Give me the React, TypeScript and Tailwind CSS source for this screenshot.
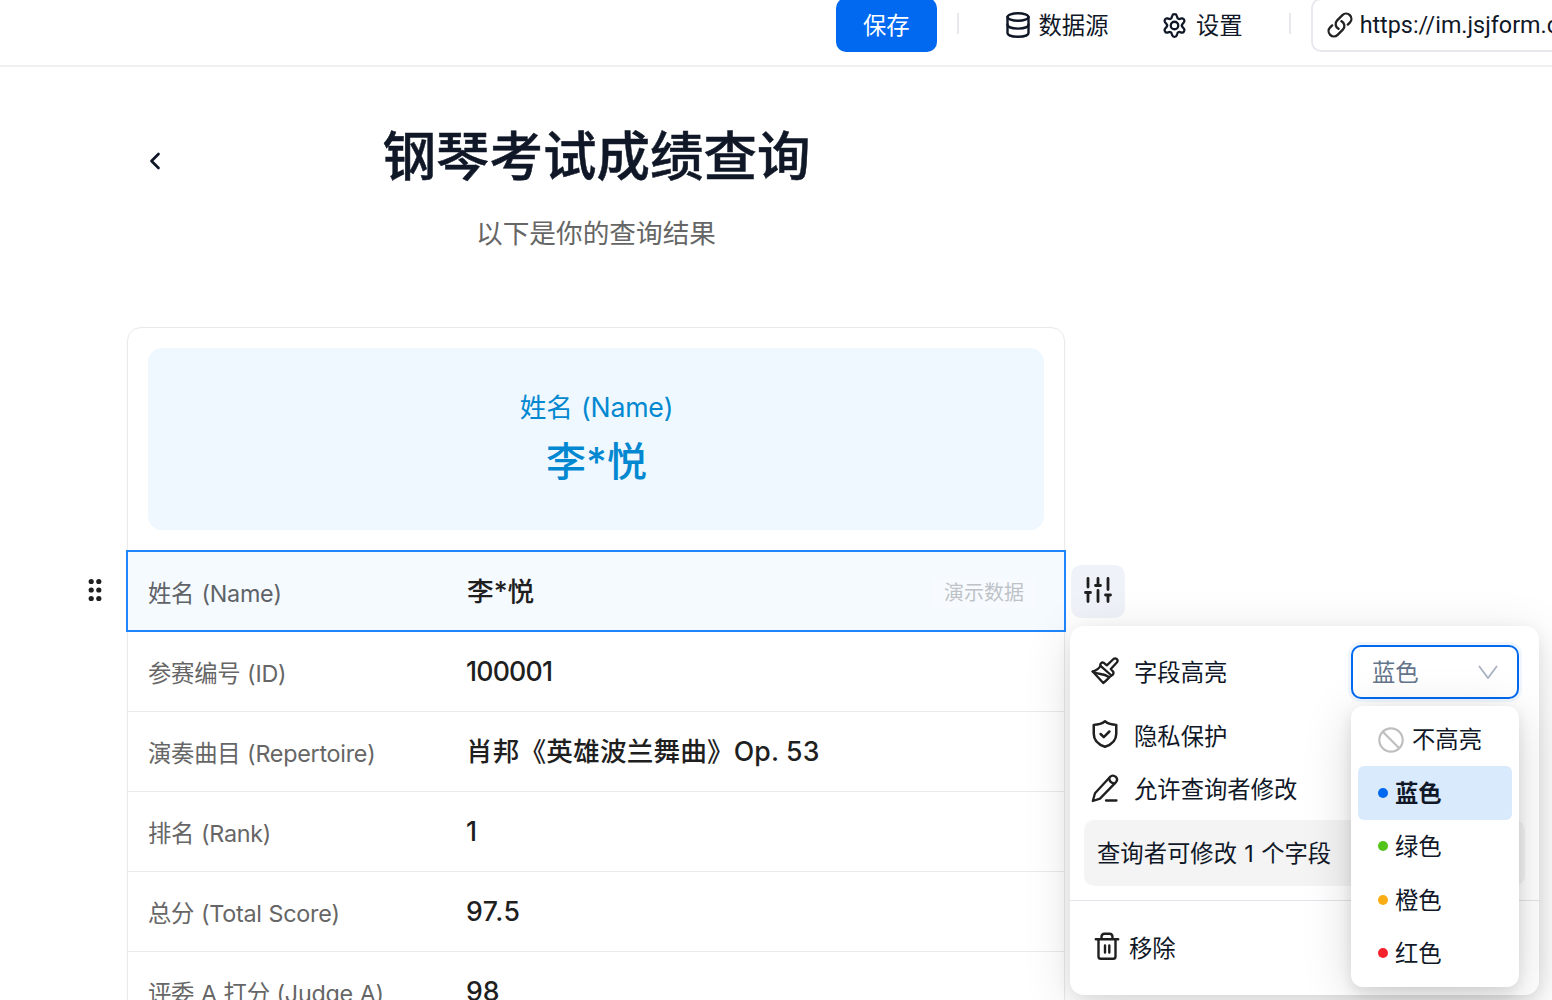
import React from 'react';
import { ChevronLeft } from 'lucide-react';

interface Field {
  label: string;
  value: string;
  valueClass?: string;
}

const FIELDS: Field[] = [
  { label: '参赛编号 (ID)', value: '100001', valueClass: 'tracking-[-0.8px]' },
  { label: '演奏曲目 (Repertoire)', value: '肖邦《英雄波兰舞曲》Op. 53', valueClass: 'tracking-[0.12px]' },
  { label: '排名 (Rank)', value: '1' },
  { label: '总分 (Total Score)', value: '97.5', valueClass: 'tracking-[0.5px]' },
  { label: '评委 A 打分 (Judge A)', value: '98' },
];

const COLORS = [
  { name: '蓝色', dot: 'bg-[#0069f0]', selected: true },
  { name: '绿色', dot: 'bg-[#52c41a]', selected: false },
  { name: '橙色', dot: 'bg-[#faad14]', selected: false },
  { name: '红色', dot: 'bg-[#f5222d]', selected: false },
];

interface IconProps {
  children: React.ReactNode;
  className: string;
  size?: number;
  stroke?: number;
}

// Shared wrapper for the stroke icons
const Icon = ({ children, className, size = 24, stroke = 2 }: IconProps) => (
  <svg
    viewBox={`0 0 ${size} ${size}`}
    fill="none"
    stroke="currentColor"
    strokeWidth={stroke}
    strokeLinecap="round"
    strokeLinejoin="round"
    className={`shrink-0 ${className}`}
  >
    {children}
  </svg>
);

const Header = () => (
  <header className="flex h-[67px] items-start border-b-2 border-[#f0f0f1] pl-[836px] text-[23.33px] text-[#101828]">
    <button className="-mt-0.5 flex h-[54px] w-[100.5px] shrink-0 items-center justify-center rounded-[10px] bg-[#0069f0] pt-[3px] text-white">
      保存
    </button>
    <div className="mt-[13px] ml-[20px] h-[21px] w-0.5 shrink-0 bg-[#e8e9ee]" />
    <div className="ml-[46.5px] flex h-[50px] shrink-0 items-center gap-[7.5px]">
      <Icon className="h-[26px] w-[26px]" size={26} stroke={2.4}>
        <ellipse cx="13" cy="5" rx="10.500" ry="3.800" />
        <path d="M2.500 5v16c0 2 4 3.800 10.500 3.800S23.500 23 23.500 21V5" />
        <path d="M2.500 12.800c0 2 4 3.800 10.500 3.800s10.500-1.800 10.500-3.800" />
      </Icon>
      <span className="pt-[3px]">数据源</span>
    </div>
    <div className="ml-[54px] flex h-[50px] shrink-0 items-center gap-[8.5px]">
      <Icon className="h-[25px] w-[25px]" stroke={2.2}>
        <path d="M9.800 2.600c.5-1.900 3.900-1.900 4.400 0l.5 1.700a2 2 0 0 0 2.500 1.400l1.600-.5c2-.5 3.600 2.300 2.200 3.800l-1.200 1.400a2.300 2.300 0 0 0 0 3.200l1.200 1.400c1.400 1.500-.2 4.300-2.200 3.800l-1.600-.5a2 2 0 0 0-2.500 1.400l-.5 1.700c-.5 1.900-3.900 1.900-4.400 0l-.5-1.700a2 2 0 0 0-2.500-1.400l-1.600.5c-2 .5-3.600-2.300-2.200-3.800l1.200-1.400a2.300 2.300 0 0 0 0-3.200L3 9C1.600 7.500 3.200 4.700 5.200 5.200l1.600.5a2 2 0 0 0 2.500-1.400z" />
        <circle cx="12" cy="12" r="3.600" />
      </Icon>
      <span className="pt-[3px]">设置</span>
    </div>
    <div className="mt-[13px] ml-[46px] h-[21px] w-0.5 shrink-0 bg-[#e8e9ee]" />
    <div className="-mt-0.5 ml-[20px] flex h-[54px] w-[320px] shrink-0 items-center gap-[6px] rounded-[10px] border-2 border-[#e8e9ee] pl-[13px]">
      <Icon className="h-[28px] w-[28px] text-[#222]" stroke={2}>
        <path d="M13.190 8.688a4.500 4.500 0 0 1 1.242 7.244l-4.500 4.500a4.500 4.500 0 0 1-6.364-6.364l1.757-1.757m13.350-.622 1.757-1.757a4.500 4.500 0 0 0-6.364-6.364l-4.500 4.500a4.500 4.500 0 0 0 1.242 7.244" />
      </Icon>
      <span className="pt-px font-['Roboto',sans-serif]">https://im.jsjform.com</span>
    </div>
  </header>
);

const DragHandle = () => (
  <svg viewBox="0 0 14 24" fill="currentColor" className="absolute top-[26px] -left-[40.5px] h-[24px] w-[14px] text-[#1f1f1f]">
    {[3.5, 12, 20.5].map((y) => (
      <React.Fragment key={y}>
        <circle cx="3.200" cy={y} r="2.600" />
        <circle cx="10.800" cy={y} r="2.600" />
      </React.Fragment>
    ))}
  </svg>
);

const ColorSelect = () => (
  <div className="relative -mt-px">
    <div className="flex h-[54px] w-[168px] items-center justify-between rounded-[10px] border-2 border-[#0069f0] bg-white pr-[19px] pl-[19px] text-[#64748b] shadow-[0_0_0_3px_rgba(0,105,240,0.06)]">
      <span className="pt-[3px]">蓝色</span>
      <svg viewBox="0 0 20 14" fill="none" stroke="#a8b3c2" strokeWidth="1.800" className="-mt-px h-[14px] w-[20px]">
        <path d="M1 1l9 12 9-12" />
      </svg>
    </div>

    {/* Options */}
    <div className="absolute top-[61px] left-0 z-10 h-[281px] w-[168px] rounded-[12px] bg-white p-[7px] shadow-[0_10px_50px_rgba(0,0,0,0.15),0_5px_14px_rgba(0,0,0,0.10)]">
      <div className="flex h-[53px] items-center gap-[8px] pl-[20px]">
        <Icon className="h-[26px] w-[26px] text-[#bfbfbf]">
          <circle cx="12" cy="12" r="10.800" />
          <path d="M4.400 4.400l15.200 15.200" />
        </Icon>
        <span className="pt-px">不高亮</span>
      </div>
      {COLORS.map((c) => (
        <div
          key={c.name}
          className={`flex h-[53.500px] items-center gap-[7px] rounded-[6px] pl-[20px] ${c.selected ? 'bg-[#d9eafd] font-bold' : ''}`}
        >
          <span className={`h-[10px] w-[10px] rounded-full ${c.dot}`} />
          <span className="pt-[3px]">{c.name}</span>
        </div>
      ))}
    </div>
  </div>
);

const FieldSettings = () => (
  <div className="absolute top-[74px] left-[942px] z-10 h-[369px] w-[469px] rounded-[14px] bg-white text-[23.33px] text-[#101828] shadow-[0_10px_50px_rgba(0,0,0,0.12),0_5px_16px_rgba(0,0,0,0.08)]">
    <div className="flex h-[93px] items-center pr-[20px] pl-[20px]">
      <Icon className="-mt-[3px] h-[30px] w-[30px] text-[#1f1f1f]" size={30} stroke={2.3}>
        <path d="M2.700 15.500C6 14.500 9 12.800 10.500 9.800C9.800 7.500 11.800 5.800 13.800 6.800L16.800 9.300L23.500 3C25.800 1.200 29 4 26.800 6.500L20.800 13L23 15.500C24 17 23.300 19 21.500 19.500C19 21 17 24.500 13.300 27Z" />
        <path d="M10.500 9.800L21.500 19.500M2.700 15.500C8 19 13 17 18 20.500" />
      </Icon>
      <span className="ml-[14px] flex-1 pt-px">字段高亮</span>
      <ColorSelect />
    </div>
    <div className="-mt-px flex h-[36px] items-center pl-[20px]">
      <Icon className="-mt-[4px] h-[30px] w-[30px] text-[#1f1f1f]">
        <path d="M12 1.800c2.500 2 5.500 2.800 9 2.900v7.100c0 5-3.500 8.600-9 10.400-5.500-1.800-9-5.400-9-10.400V4.700c3.500-.1 6.500-.9 9-2.900z" />
        <path d="M8.500 12l2.500 2.500 4.500-4.500" />
      </Icon>
      <span className="ml-[14px] pt-[2px]">隐私保护</span>
    </div>
    <div className="mt-[18px] flex h-[36px] items-center pl-[20px]">
      <Icon className="-mt-[5px] h-[30px] w-[30px] text-[#1f1f1f]" size={30} stroke={2.3}>
        <path d="M20.200 3.700C23.300.2 29.300 5.300 26 9.100L10 25.600L2.800 28L5 20.300Z" />
        <path d="M19.300 5C19 8 21.500 10.500 24.500 10.300M16 27.500H26.500" />
      </Icon>
      <span className="ml-[14px]">允许查询者修改</span>
    </div>
    <div className="mx-[14px] mt-[12px] flex h-[66px] items-center rounded-[10px] bg-[#f4f4f4] pt-[2px] pl-[13px] [word-spacing:0.8px]">
      查询者可修改 1 个字段
    </div>
    <div className="mt-[14px] flex h-[94px] items-center border-t border-[#e2e4e9] pl-[22px]">
      <Icon className="-mt-[3px] h-[30px] w-[30px] text-[#1f1f1f]" size={30} stroke={2.4}>
        <path d="M3.800 8.200H26.200M6.500 8.200V25.500C6.500 27 7.200 27.800 8.800 27.800H21.200C22.800 27.800 23.500 27 23.500 25.500V8.200M9.500 8V6C9.500 4 10.500 2.700 12.500 2.700H17.500C19.500 2.700 20.500 4 20.500 6V8M13 14.500V21.500M17.300 14.500V21.500" />
      </Icon>
      <span className="ml-[7px] pt-[3px]">移除</span>
    </div>
  </div>
);

const SelectedRow = () => (
  <div className="relative -mx-0.5 flex h-[82px] items-center border-2 border-[#1f86fb] bg-[#f5faff] pl-[20px]">
    <DragHandle />
    <span className="mt-[6px] w-[319px] text-[23.33px] tracking-[-0.25px] text-[#5f6368] [word-spacing:1px]">姓名 (Name)</span>
    <span className="flex-1 text-[26.67px] font-medium text-[#1f1f1f]">李*悦</span>
    <span className="mt-[4px] mr-[28px] rounded bg-[#f7fbff] px-[12px] text-[20px] text-[#bfc3c8]">演示数据</span>
    <button className="absolute top-[13px] left-[943px] flex h-[53px] w-[54px] items-center justify-center rounded-[10px] bg-[#eff3f9] pb-[3px] text-[#1f1f1f]">
      <svg viewBox="0 0 28 26" fill="none" stroke="currentColor" strokeWidth="2.800" strokeLinecap="round" className="h-[26px] w-[28px]">
        <path d="M4 1.500v8.500M4 16v8.500M1.500 15.500h5M14 1.500v6.500M14 13.500v11M11.500 8.500h5M24 1.500v11M24 18v6.500M21.500 18h5" />
      </svg>
    </button>
    <FieldSettings />
  </div>
);

export default function App() {
  return (
    <div className="h-screen w-full overflow-hidden bg-white font-['Inter','Noto_Sans_CJK_SC',sans-serif]">
      <Header />
      <main className="ml-[127px] w-[938px]">
        <div className="flex h-[260px] flex-col items-center">
          <div className="mt-[50px] flex h-[80px] w-full items-center">
            <ChevronLeft className="mt-[8px] ml-[14px] h-[28px] w-[28px] text-[#101828]" strokeWidth={2.3} />
            <h1 className="flex-1 pr-[41px] text-center text-[53.5px] font-medium text-[#101828] [-webkit-text-stroke:0.5px]">钢琴考试成绩查询</h1>
          </div>
          <p className="mt-[16px] text-[26.67px] text-[#666]">以下是你的查询结果</p>
        </div>

        <section className="rounded-t-[14px] border border-[#e9eaec] shadow-[0_1px_3px_rgba(0,0,0,0.04)]">
          <div className="mx-[20px] mt-[20px] mb-[20px] flex h-[182px] flex-col items-center rounded-[14px] bg-[#eff8ff] pt-[39px] text-[#0288d1]">
            <div className="ml-[1px] h-[40px] text-[26.67px] leading-[40px] tracking-[-0.2px] [word-spacing:1px]">姓名 (Name)</div>
            <div className="mt-[5px] ml-[1px] h-[60px] text-[40px] leading-[60px] font-medium">李*悦</div>
          </div>
          <SelectedRow />
          {FIELDS.map((f) => (
            <div key={f.label} className="flex h-[80px] items-center border-b border-[#e9eaec] pl-[20px]">
              <span className="mt-[6px] w-[318px] text-[23.33px] tracking-[-0.25px] text-[#666] [word-spacing:0.5px]">{f.label}</span>
              <span className={`-mt-px text-[26.67px] font-medium text-[#1f1f1f] ${f.valueClass ?? ''}`}>{f.value}</span>
            </div>
          ))}
        </section>
      </main>
    </div>
  );
}
